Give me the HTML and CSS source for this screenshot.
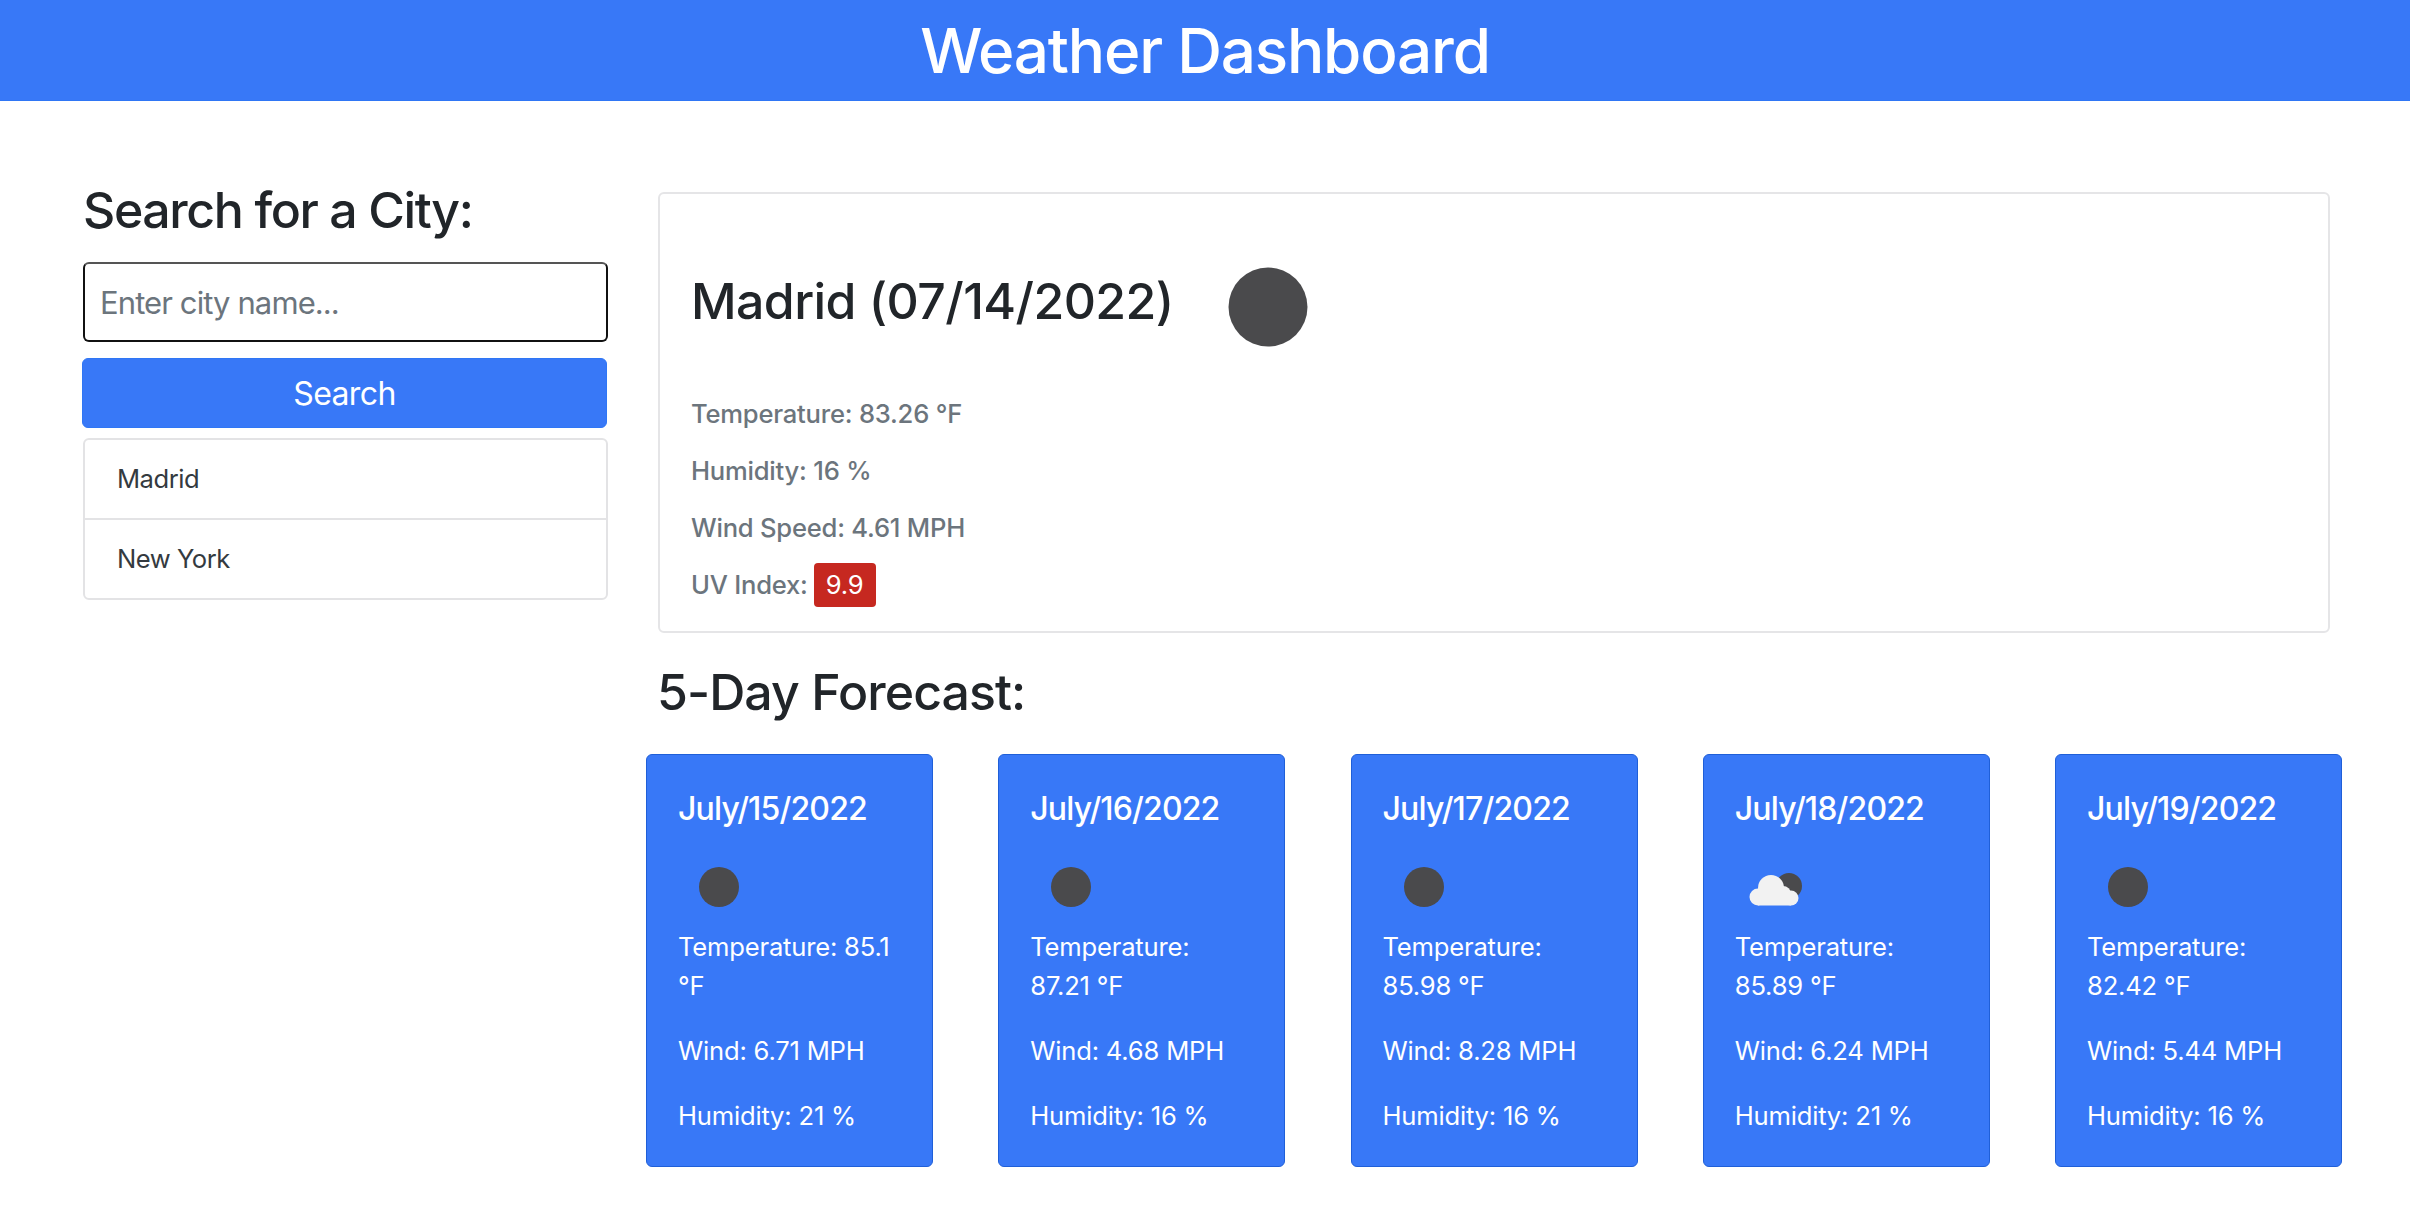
FILE: index.html
```html
<!DOCTYPE html>
<html lang="en">
<head>
  <meta charset="UTF-8">
  <title>Weather Dashboard</title>
  <link rel="stylesheet" href="styles.css">
</head>
<body>

  <header class="top-bar">
    <h1>Weather Dashboard</h1>
  </header>

  <div class="page">
    <aside class="sidebar">
      <h3 class="side-title">Search for a City:</h3>
      <input class="city-input" type="text" placeholder="Enter city name...">
      <button class="search-btn">Search</button>
      <ul class="history">
        <li>Madrid</li>
        <li>New York</li>
      </ul>
    </aside>

    <main class="content">
      <section class="today">
        <div class="today-head">
          <h2>Madrid (07/14/2022)</h2>
          <svg class="today-icon" viewBox="0 0 128 128"><circle cx="64" cy="64" r="39.5" fill="#4a4a4c"/></svg>
        </div>
        <p>Temperature: 83.26 °F</p>
        <p>Humidity: 16 %</p>
        <p>Wind Speed: 4.61 MPH</p>
        <p class="uv">UV Index: <span class="uv-badge">9.9</span></p>
      </section>

      <h3 class="forecast-title">5-Day Forecast:</h3>

      <div class="forecast">
        <div class="day">
          <h5>July/15/2022</h5>
          <svg class="day-icon" viewBox="0 0 80 80"><circle cx="40" cy="40" r="20" fill="#4a4a4c"/></svg>
          <p>Temperature: 85.1 °F</p>
          <p>Wind: 6.71 MPH</p>
          <p>Humidity: 21 %</p>
        </div>
        <div class="day">
          <h5>July/16/2022</h5>
          <svg class="day-icon" viewBox="0 0 80 80"><circle cx="40" cy="40" r="20" fill="#4a4a4c"/></svg>
          <p>Temperature: 87.21 °F</p>
          <p>Wind: 4.68 MPH</p>
          <p>Humidity: 16 %</p>
        </div>
        <div class="day">
          <h5>July/17/2022</h5>
          <svg class="day-icon" viewBox="0 0 80 80"><circle cx="40" cy="40" r="20" fill="#4a4a4c"/></svg>
          <p>Temperature: 85.98 °F</p>
          <p>Wind: 8.28 MPH</p>
          <p>Humidity: 16 %</p>
        </div>
        <div class="day">
          <h5>July/18/2022</h5>
          <svg class="day-icon" viewBox="0 0 80 80">
            <circle cx="53" cy="39" r="13" fill="#4a4a4c"/>
            <g fill="#f2f2f2">
              <circle cx="22" cy="50" r="8.5"/>
              <circle cx="35" cy="41" r="13"/>
              <circle cx="47" cy="47" r="8"/>
              <circle cx="55" cy="51" r="7.5"/>
              <rect x="22" y="46" width="33" height="12.5"/>
            </g>
          </svg>
          <p>Temperature: 85.89 °F</p>
          <p>Wind: 6.24 MPH</p>
          <p>Humidity: 21 %</p>
        </div>
        <div class="day">
          <h5>July/19/2022</h5>
          <svg class="day-icon" viewBox="0 0 80 80"><circle cx="40" cy="40" r="20" fill="#4a4a4c"/></svg>
          <p>Temperature: 82.42 °F</p>
          <p>Wind: 5.44 MPH</p>
          <p>Humidity: 16 %</p>
        </div>
      </div>
    </main>
  </div>

</body>
</html>
```

FILE: styles.css
```css
* {
  box-sizing: border-box;
}
body {
  margin: 0;
  font-family: Inter, "Liberation Sans", sans-serif;
  font-size: 25.6px;
  line-height: 1.5;
  color: #212529;
  background-color: #fff;
}
h1, h2, h3, h5, p, ul {
  margin: 0;
  padding: 0;
  font-weight: 500;
}
p {
  font-weight: 400;
  letter-spacing: -0.2px;
}
.top-bar {
  height: 101px;
  background-color: #3878f7;
  border-bottom: 1px solid #2f76f5;
  text-align: center;
  color: #fff;
}
.top-bar h1 {
  font-size: 62px;
  line-height: 102px;
  letter-spacing: -1.2px;
}
.page {
  display: flex;
  padding: 91px 80px 0 83px;
}

/* left column */
.sidebar {
  width: 525px;
  flex-shrink: 0;
  margin-right: 50px;
}
.side-title {
  font-size: 50px;
  line-height: 36px;
  letter-spacing: -1.4px;
  margin-bottom: 34px;
}
.city-input {
  display: block;
  width: 100%;
  height: 80px;
  padding: 0 15px;
  border: 2px solid #111;
  border-top-color: #555;
  border-radius: 6px;
  font-family: inherit;
  font-size: 31px;
  letter-spacing: -0.9px;
  outline: none;
}
.city-input::placeholder {
  color: #6c757d;
}
.search-btn {
  display: block;
  width: 525px;
  height: 70px;
  margin: 16px 0 10px -1px;
  background-color: #3878f7;
  color: #fff;
  border: 1px solid #2f76f5;
  border-radius: 6px;
  font-family: inherit;
  font-size: 32px;
  letter-spacing: -0.6px;
}
.history {
  list-style: none;
  border: 2px solid #e3e3e5;
  border-radius: 6px;
}
.history li {
  height: 78px;
  padding-left: 32px;
  line-height: 78px;
  color: #343a40;
  font-weight: 400;
  letter-spacing: -0.5px;
}
.history li + li {
  height: 80px;
  border-top: 2px solid #e3e3e5;
}

/* right column */
.content {
  flex: 1;
  min-width: 0;
}
.today {
  height: 441px;
  padding: 49px 32px 0 31px;
  border: 2px solid #e5e5e7;
  border-radius: 6px;
  color: #6c757d;
}
.today-head {
  display: flex;
  align-items: center;
  height: 128px;
  margin-bottom: 24px;
}
.today-head h2 {
  font-size: 50px;
  line-height: 58px;
  letter-spacing: -0.58px;
  color: #212529;
  padding-bottom: 12px;
}
.today-icon {
  width: 128px;
  height: 128px;
  margin-left: 30px;
}
.today p {
  height: 38px;
  line-height: 38px;
  margin-bottom: 19px;
  font-weight: 500;
  letter-spacing: -0.22px;
}
.today .uv {
  display: flex;
  align-items: center;
  gap: 6px;
}
.uv-badge {
  display: inline-block;
  flex-shrink: 0;
  width: 62px;
  height: 44px;
  line-height: 44px;
  text-align: center;
  background-color: #c62820;
  color: #fff;
  border-radius: 4px;
  font-weight: 400;
}
.forecast-title {
  font-size: 50px;
  line-height: 58px;
  letter-spacing: -0.93px;
  margin: 30px 0 0 -1px;
}
.forecast {
  display: flex;
  justify-content: space-between;
  margin: 33px -12px 0;
}
.day {
  width: 287px;
  height: 413px;
  padding: 32px 32px 0 31px;
  background-color: #3878f7;
  border: 1px solid #1f5fd8;
  border-radius: 6px;
  color: #fff;
}
.day h5 {
  font-size: 32px;
  line-height: 44px;
  letter-spacing: -0.85px;
}
.day-icon {
  display: block;
  width: 80px;
  height: 80px;
  margin: 16px 0 0 1px;
}
.day p {
  line-height: 39px;
  margin-bottom: 26px;
}
```
